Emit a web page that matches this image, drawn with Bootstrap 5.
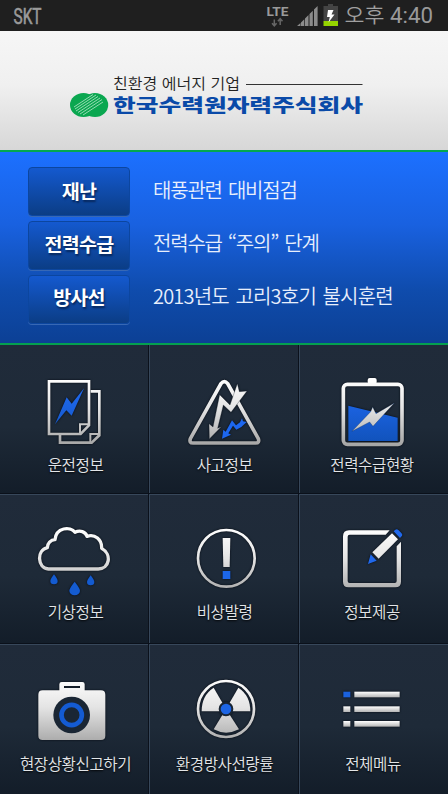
<!DOCTYPE html>
<html lang="ko">
<head>
<meta charset="utf-8">
<meta name="viewport" content="width=device-width, initial-scale=1">
<title>한국수력원자력주식회사</title>
<link rel="stylesheet" href="https://cdn.jsdelivr.net/npm/bootstrap@5.3.0/dist/css/bootstrap.min.css">
<style>
  body { font-family: "Noto Sans CJK KR", sans-serif; background: #16202c; width: 448px; height: 794px; }
  svg { display: block; overflow: visible; flex: none; }
  .status-bar { height: 31px; background: #1f1f1f; padding: 0 15px 0 13px; }
  .brand-bar { height: 119px; background: linear-gradient(#f6f6f6, #f0f0f0 45%, #d7d7d7); }
  .alerts { height: 195px; border-top: 2px solid #04a84f; border-bottom: 2px solid #04a050;
    background: linear-gradient(#1c70ff, #1961e0 38%, #0f4cad 72%, #0c4095); padding: 15px 0 0 28px; }
  .alert-line { height: 54px; gap: 23px; }
  .btn-alert { width: 102px; height: 49px; padding: 0 0 2px; border: 1px solid #0c469f; border-radius: 4px;
    background: linear-gradient(#1459cf, #0b3d85); color: #fff; font-size: 19.5px; font-weight: 700;
    letter-spacing: -.7px; line-height: 40px; text-shadow: 1px 2px 2px #06265a; box-shadow: 0 1px 0 #3768b5; }
  .alert-line:nth-child(2) .btn-alert { padding-bottom: 4px; }
  .alert-line:nth-child(3) .btn-alert { padding-bottom: 6px; }
  .btn-alert:hover { background: #0b3d85; color: #fff; }
  .alert-text { color: #e8effc; font-size: 20px; font-weight: 350; letter-spacing: -1.2px; word-spacing: 1.7px; line-height: 46px; }
  .alert-line:nth-child(2) .alert-text { line-height: 44px; }
  .alert-line:nth-child(3) .alert-text { line-height: 42px; letter-spacing: -.8px; }
  .menu-grid { display: grid; grid-template-columns: 149px 150px 149px; grid-template-rows: 149px 150px 150px; height: 449px; }
  .tile { background: linear-gradient(#202b3a, #1e2a38 55%, #131d29); border-right: 1px solid #0b111b;
    border-bottom: 1px solid #0a101a; box-shadow: inset 1px 1px 0 #37475a; color: #e2e5e8; min-width: 0; }
  .tile:nth-child(-n+3) { box-shadow: inset 1px 0 0 #37475a; }
  .tile:nth-child(3n+1) { box-shadow: inset 0 1px 0 #37475a; }
  .tile:first-child { box-shadow: none; }
  .tile:nth-child(3n) { border-right: 0; }
  .tile:nth-child(n+7) { border-bottom: 0; }
  .tile svg { width: 150px; height: 110px; filter: drop-shadow(0 0 1px #050a12); }
  .tile-name { font-size: 15.6px; font-weight: 350; letter-spacing: -.45px; line-height: 20px; width: 150px; margin-top: -1px;
    text-align: center; white-space: nowrap; text-shadow: 0 1px 2px #000; padding-left: 1px; }
  .tile:nth-child(3n) .tile-name { padding: 0 4px 0 0; }
  .tile:nth-child(n+4):nth-child(-n+6) .tile-name { margin-top: -3px; }
  .tile:last-child .tile-name { padding: 0 2px 0 0; }
</style>
<script src="https://cdn.jsdelivr.net/npm/bootstrap@5.3.0/dist/js/bootstrap.bundle.min.js"></script>
</head>
<body class="m-0 overflow-hidden">

<header class="status-bar d-flex justify-content-between">
  <svg width="30" height="31" aria-label="SKT"><text x=".5" y="24" font-family="Roboto" font-size="22" fill="#9a9a9a" stroke="#9a9a9a" stroke-width=".6" textLength="28" lengthAdjust="spacingAndGlyphs">SKT</text></svg>
  <svg width="167" height="31" viewBox="266 0 167 31">
    <text x="266.500" y="16" font-family="Roboto" font-size="13.500" font-weight="700" fill="#9a9a9a" textLength="22" lengthAdjust="spacingAndGlyphs">LTE</text>
    <g fill="none" stroke="#666" stroke-width="1.500"><path d="M274.300 19.500v6M272 23.200l2.300 2.600 2.300-2.600M280.200 25v-6M277.900 21.300l2.300-2.600 2.300 2.600"/></g>
    <path fill="#8c8c8c" d="M297 26l3.500-3v3zM301 22.500l3.300-3.300V26H301zM305 18.500l3.500-3.500V26H305zM309.500 14l3.300-3.300V26h-3.300zM314 9.500l3.600-3.500V26H314z"/>
    <path fill="#444" d="M328 4h5v2h5v15h-14.500V6h4.500z"/><path fill="#95d400" d="M323.500 21H338v5h-14.500z"/>
    <path fill="#fff" d="M328 10h5.500l-2 4.500h3l-6 8 1.300-5.500H327z"/>
    <text x="344.500" y="23" font-family="Noto Sans CJK KR" font-weight="350" font-size="20.500" fill="#a0a0a0" textLength="40" lengthAdjust="spacingAndGlyphs">오후</text>
    <text x="390" y="23" font-family="Roboto" font-size="22" fill="#9a9a9a" textLength="43" lengthAdjust="spacingAndGlyphs">4:40</text>
  </svg>
</header>

<section class="brand-bar">
  <svg width="448" height="119" viewBox="0 31 448 119">
    <defs>
      <clipPath id="emblem"><path d="M83 93H97C102 93 108 97 108 105S101 117 94 117H83C76 117 70 112 70 105S76 93 83 93z"/></clipPath>
    </defs>
    <g fill="#0aa750"><ellipse cx="83.500" cy="105" rx="13.500" ry="12"/><ellipse cx="95" cy="105" rx="13.200" ry="12"/></g>
    <path d="M74 107l19-12.500M75 109l21-14M76 111l22-14.500M78 112.500l22-14.500M80 114l22-14.500M83 115l20-13" stroke="#c5ead4" stroke-width=".75" clip-path="url(#emblem)"/>
    <text x="113" y="89" font-size="15" font-weight="350" fill="#222" textLength="127" lengthAdjust="spacingAndGlyphs">친환경 에너지 기업</text>
    <path d="M246 84.500h116.500" stroke="#333"/>
    <text x="113" y="112" font-size="18" font-weight="900" fill="#0a4aa8" textLength="250" lengthAdjust="spacingAndGlyphs">한국수력원자력주식회사</text>
  </svg>
</section>

<section class="alerts">
  <div class="alert-line d-flex"><button class="btn btn-alert">재난</button><span class="alert-text">태풍관련 대비점검</span></div>
  <div class="alert-line d-flex"><button class="btn btn-alert">전력수급</button><span class="alert-text">전력수급 “주의” 단계</span></div>
  <div class="alert-line d-flex"><button class="btn btn-alert">방사선</button><span class="alert-text">2013년도 고리3호기 불시훈련</span></div>
</section>

<main class="menu-grid">
  <div class="tile">
    <svg viewBox="0 0 450 330">
      <defs>
        <linearGradient id="metal" gradientUnits="userSpaceOnUse" x1="0" y1="100" x2="0" y2="300"><stop offset="0" stop-color="#fff"/><stop offset=".45" stop-color="#e4e4e4"/><stop offset="1" stop-color="#a6a6a6"/></linearGradient>
        <linearGradient id="azure" gradientUnits="userSpaceOnUse" x1="0" y1="130" x2="0" y2="300"><stop offset="0" stop-color="#206af2"/><stop offset="1" stop-color="#1051b8"/></linearGradient>
      </defs>
      <g fill="none" stroke="url(#metal)" stroke-width="8">
        <path d="M272 139h26v132l-23 22h-95v-24"/><path d="M271 293v-26h27" stroke-width="6"/>
        <path d="M147 109h120v132l-25 26h-95z"/><path d="M240 265v-27h27" stroke-width="6"/>
      </g>
      <path fill="url(#azure)" d="M165 238l35-81 15 19 37-46-37 82-16-16z"/>
    </svg>
    <div class="tile-name">운전정보</div>
  </div>
  <div class="tile">
    <svg viewBox="-3 0 450 330">
      <path d="M213 116q10-12 20 0l92 165q4 13-8 13H129q-12 0-8-13z" fill="none" stroke="url(#metal)" stroke-width="11"/>
      <path d="M178 282L177 236 189 246 209 149 240 180 262 116 268 140 291 138 243 202 220 180 203 250 214 245z" fill="url(#metal)" stroke="#1b2633" stroke-width="1"/>
      <path d="M216 281L220 254 227 260 246 226 258 241 270 232 276 220 279 229 290 231 274 246 259 254 249 242 235 265 243 269z" fill="#1d67ef"/>
    </svg>
    <div class="tile-name">사고정보</div>
  </div>
  <div class="tile">
    <svg viewBox="3 0 450 330">
      <rect x="209" y="99" width="27" height="18" rx="6" fill="#fff"/>
      <rect x="136" y="118" width="176" height="180" rx="12" fill="none" stroke="url(#metal)" stroke-width="11"/>
      <path d="M151 182l148 36v70H151z" fill="url(#azure)"/>
      <path d="M162 259L218 200 224 186 234 206 289 174 225 244 215 231z" fill="url(#metal)" stroke="#16355f" stroke-width="1"/>
    </svg>
    <div class="tile-name">전력수급현황</div>
  </div>
  <div class="tile">
    <svg viewBox="0 -3 450 330">
      <path d="M145 222c-33-3-36-56-3-64 0-13 10-24 23-24 3-37 46-41 60-22 15-8 32-2 36 12 24-8 45 10 44 36 32 18 23 62-10 62z" fill="none" stroke="url(#metal)" stroke-width="10" stroke-linejoin="round"/>
      <g fill="#145bd0"><path d="M162 238q11 14 11 20a11 10 0 0 1-22 0q0-6 11-20z"/><path d="M272 241q11 14 11 20a11 10 0 0 1-22 0q0-6 11-20z"/><path d="M224 260q16 20 16 27a16 14 0 0 1-32 0q0-7 16-27z"/></g>
    </svg>
    <div class="tile-name">기상정보</div>
  </div>
  <div class="tile">
    <svg viewBox="-3 -3 450 330">
      <circle cx="229" cy="190" r="85" fill="none" stroke="url(#metal)" stroke-width="8"/>
      <path d="M218 129h23l-2 87h-19z" fill="url(#metal)"/><path d="M218 228h23v24h-23z" fill="#1c66e8"/>
    </svg>
    <div class="tile-name">비상발령</div>
  </div>
  <div class="tile">
    <svg viewBox="3 -3 450 330">
      <path d="M275 106l-12 13H155q-6 0-6 6v133q0 6 6 6h135q6 0 6-6V154l13-14v120q0 17-17 17H151q-16 0-16-17V124q0-18 18-18z" fill="url(#metal)"/>
      <path d="M282 115l18 18-58 58-19-19z" fill="url(#metal)"/>
      <path d="M287 109l5-5q5-3 10 2l8 8q5 5 1 10l-5 5zM218 178l18 19-26 10z" fill="#2068eb"/>
    </svg>
    <div class="tile-name">정보제공</div>
  </div>
  <div class="tile">
    <svg viewBox="0 0 450 330">
      <path fill="url(#metal)" fill-rule="evenodd" d="M178 139v-18q0-7 7-7h62q7 0 7 7v18h49q13 0 13 13v123q0 13-13 13H128q-13 0-13-13V152q0-13 13-13zM192 126v6h48v-6z"/>
      <circle cx="215" cy="213" r="55" fill="#1a2634"/><circle cx="215" cy="213" r="30.500" fill="none" stroke="#145bd2" stroke-width="14"/>
    </svg>
    <div class="tile-name">현장상황신고하기</div>
  </div>
  <div class="tile">
    <svg viewBox="-3 0 450 330">
      <circle cx="228" cy="195" r="84" fill="none" stroke="url(#metal)" stroke-width="8"/>
      <g fill="url(#metal)"><path d="M228 195L191 131Q155 154 155 202H228z"/><path d="M228 195L265 131Q301 154 301 202H228z"/><path d="M228 195L191 256Q228 276 267 256z"/></g>
      <circle cx="228" cy="195" r="19" fill="#1d65e4" stroke="#192533" stroke-width="6"/>
    </svg>
    <div class="tile-name">환경방사선량률</div>
  </div>
  <div class="tile">
    <svg viewBox="3 0 450 330">
      <defs><linearGradient id="bar" x1="0" y1="0" x2="0" y2="1"><stop offset="0" stop-color="#fff"/><stop offset="1" stop-color="#b5b5b5"/></linearGradient></defs>
      <g fill="url(#bar)"><rect x="169" y="143" width="136" height="17"/><rect x="169" y="187" width="136" height="17"/><rect x="169" y="231" width="136" height="17"/><rect x="136" y="187" width="21" height="17"/><rect x="136" y="231" width="21" height="17"/></g>
      <rect x="136" y="143" width="21" height="17" fill="#1a61dd"/>
    </svg>
    <div class="tile-name">전체메뉴</div>
  </div>
</main>
</body>
</html>
